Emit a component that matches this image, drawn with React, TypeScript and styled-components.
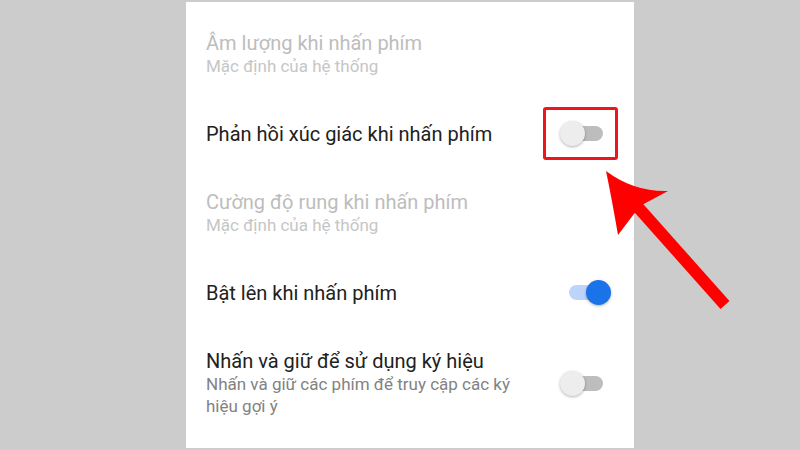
import React from "react";
import styled, { createGlobalStyle } from "styled-components";

const GlobalStyle = createGlobalStyle`
  html, body {
    margin: 0;
    padding: 0;
    background: #cccccc;
  }
  body {
    font-family: Roboto, "Noto Sans", "Liberation Sans", sans-serif;
  }
`;

const Page = styled.div`
  position: relative;
  width: 800px;
  height: 450px;
  overflow: hidden;
  background: #cccccc;
  display: flex;
  justify-content: center;
`;

const Panel = styled.div`
  width: 448px;
  margin: 2px 0 2px 20px;
  background: #ffffff;
  padding: 7px 23px 0 20px;
  box-sizing: border-box;
  display: flex;
  flex-direction: column;
`;

const Row = styled.div`
  display: flex;
  align-items: center;
  padding: 22px 0;
  gap: 28px;
`;

const TextCol = styled.div`
  flex: 1;
  display: flex;
  flex-direction: column;
`;

const Title = styled.div<{ $disabled?: boolean }>`
  font-size: 20px;
  line-height: 24px;
  color: ${(p) => (p.$disabled ? "#bdbdbd" : "#212121")};
`;

const Subtitle = styled.div<{ $disabled?: boolean }>`
  font-size: 17px;
  line-height: 22px;
  color: ${(p) => (p.$disabled ? "#c6c6c6" : "#828282")};
`;

const SwitchBox = styled.div`
  position: relative;
  width: 51px;
  height: 25px;
  display: flex;
  align-items: center;
  flex-shrink: 0;
`;

const Track = styled.div<{ $on?: boolean }>`
  width: 34px;
  height: 15px;
  margin-left: 9px;
  border-radius: 8px;
  background: ${(p) => (p.$on ? "#bdd5fa" : "#bdbdbd")};
`;

const Thumb = styled.div<{ $on?: boolean }>`
  position: absolute;
  top: 0;
  ${(p) => (p.$on ? "right: 0;" : "left: 0;")}
  width: 25px;
  height: 25px;
  border-radius: 50%;
  background: ${(p) => (p.$on ? "#1a73e8" : "#ededed")};
  box-shadow: 0 1px 3px rgba(0, 0, 0, 0.3);
`;

const Highlight = styled.div`
  position: absolute;
  left: -17px;
  top: -14px;
  width: 75px;
  height: 53px;
  box-sizing: border-box;
  border: 3px solid #f0151b;
  border-radius: 3px;
`;

const ArrowLayer = styled.svg`
  position: absolute;
  left: 0;
  top: 0;
  pointer-events: none;
`;

const Switch: React.FC<{ on?: boolean; marked?: boolean }> = ({ on, marked }) => (
  <SwitchBox>
    <Track $on={on} />
    <Thumb $on={on} />
    {marked && <Highlight />}
  </SwitchBox>
);

export default function App() {
  return (
    <>
      <GlobalStyle />
      <Page>
        <Panel>
          <Row>
            <TextCol>
              <Title $disabled>Âm lượng khi nhấn phím</Title>
              <Subtitle $disabled>Mặc định của hệ thống</Subtitle>
            </TextCol>
          </Row>
          <Row>
            <TextCol>
              <Title>Phản hồi xúc giác khi nhấn phím</Title>
            </TextCol>
            <Switch marked />
          </Row>
          <Row>
            <TextCol>
              <Title $disabled>Cường độ rung khi nhấn phím</Title>
              <Subtitle $disabled>Mặc định của hệ thống</Subtitle>
            </TextCol>
          </Row>
          <Row>
            <TextCol>
              <Title>Bật lên khi nhấn phím</Title>
            </TextCol>
            <Switch on />
          </Row>
          <Row>
            <TextCol>
              <Title>Nhấn và giữ để sử dụng ký hiệu</Title>
              <Subtitle>Nhấn và giữ các phím để truy cập các ký hiệu gợi ý</Subtitle>
            </TextCol>
            <Switch />
          </Row>
        </Panel>
        <ArrowLayer width="800" height="450" viewBox="0 0 800 450">
          <line x1="628" y1="196" x2="725" y2="305" stroke="#ff0000" strokeWidth="12" />
          <path
            d="M606 171 Q634 192 668 191 L640 206 L618 235 Q612 200 606 171 Z"
            fill="#ff0000"
          />
        </ArrowLayer>
      </Page>
    </>
  );
}
